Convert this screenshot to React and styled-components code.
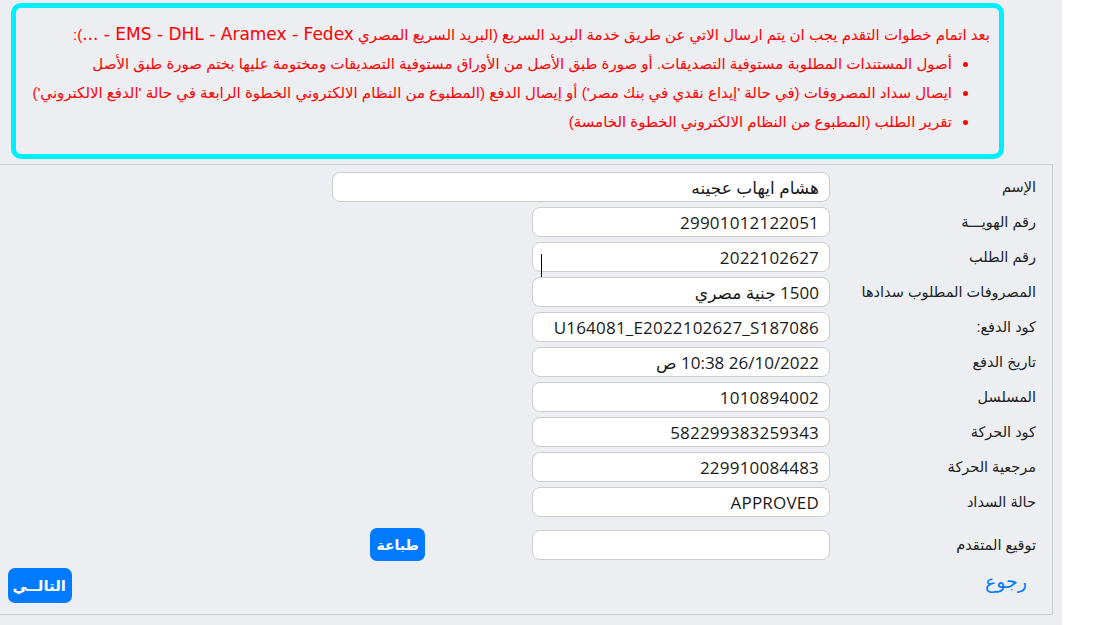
import React from "react";
import styled, { createGlobalStyle } from "styled-components";

const GlobalStyle = createGlobalStyle`
  html, body {
    margin: 0;
    padding: 0;
    background: #ffffff;
  }
  * {
    box-sizing: border-box;
  }
`;

const rows = [
  { label: "الإسم", value: "هشام ايهاب عجينه", wide: true },
  { label: "رقم الهويـــة", value: "29901012122051" },
  { label: "رقم الطلب", value: "2022102627", caret: true },
  { label: "المصروفات المطلوب سدادها", value: "1500 جنية مصري" },
  { label: "كود الدفع:", value: "U164081_E2022102627_S187086" },
  { label: "تاريخ الدفع", value: "26/10/2022 10:38 ص" },
  { label: "المسلسل", value: "1010894002" },
  { label: "كود الحركة", value: "582299383259343" },
  { label: "مرجعية الحركة", value: "229910084483" },
  { label: "حالة السداد", value: "APPROVED" },
];

export default function App() {
  return (
    <Page>
      <GlobalStyle />
      <Notice>
        <NoticeTitle>
          بعد اتمام خطوات التقدم يجب ان يتم ارسال الاتي عن طريق خدمة البريد
          السريع (البريد السريع المصري <Latin>EMS - DHL - Aramex - Fedex - ...</Latin>):
        </NoticeTitle>
        <NoticeList>
          <li>
            أصول المستندات المطلوبة مستوفية التصديقات. أو صورة طبق الأصل من
            الأوراق مستوفية التصديقات ومختومة عليها بختم صورة طبق الأصل
          </li>
          <li>
            ايصال سداد المصروفات (في حالة 'إيداع نقدي في بنك مصر') أو إيصال
            الدفع (المطبوع من النظام الالكتروني الخطوة الرابعة في حالة 'الدفع
            الالكتروني')
          </li>
          <li>تقرير الطلب (المطبوع من النظام الالكتروني الخطوة الخامسة)</li>
        </NoticeList>
      </Notice>

      <Panel>
        <Rows>
          {rows.map((r) => (
            <Row key={r.label}>
              <Label>{r.label}</Label>
              <Field $wide={r.wide}>
                <Input readOnly value={r.value} />
                {r.caret && <Caret />}
              </Field>
            </Row>
          ))}
          <SignRow>
            <Label>توقيع المتقدم</Label>
            <Field>
              <Input readOnly value="" />
            </Field>
            <PrintButton>طباعة</PrintButton>
          </SignRow>
        </Rows>
        <Footer>
          <BackLink href="#">رجوع</BackLink>
          <NextButton>التالــي</NextButton>
        </Footer>
      </Panel>
    </Page>
  );
}

const arabic = `"Liberation Sans", "DejaVu Sans", sans-serif`;

const Page = styled.div`
  width: 1062px;
  min-height: 625px;
  padding-top: 3px;
  background: #edeef2;
  direction: rtl;
  font-family: ${arabic};
  overflow: hidden;
`;

const Notice = styled.div`
  margin: 0 58px 0 11px;
  height: 156px;
  padding: 12px 9px 0 10px;
  border: 5px solid #00efff;
  border-radius: 10px;
  color: #ff0000;
  font-size: 15px;
  line-height: 29px;
`;

const NoticeTitle = styled.div``;

const Latin = styled.span`
  font-family: "DejaVu Sans", sans-serif;
  font-size: 17px;
`;

const NoticeList = styled.ul`
  margin: 0;
  padding: 0 38px 0 0;

  li::marker {
    color: #ff0000;
  }
`;

const Panel = styled.div`
  margin-top: 5px;
  width: 1053px;
  margin-right: 9px;
  border: 1px solid #cccccc;
  border-left: none;
  padding: 7px 0 11px;
`;

const Rows = styled.div`
  display: flex;
  flex-direction: column;
  gap: 5px;
`;

const Row = styled.div`
  display: flex;
  align-items: center;
  padding-right: 16px;
`;

const SignRow = styled(Row)`
  padding-top: 6px;
  padding-bottom: 7px;
`;

const Label = styled.div`
  width: 206px;
  font-size: 14.5px;
  color: #222222;
`;

const Field = styled.div`
  position: relative;
  width: ${(p) => (p.$wide ? "498px" : "298px")};
`;

const Input = styled.input`
  display: block;
  width: 100%;
  height: 30px;
  padding: 0 10px;
  border: 1px solid #cccccc;
  border-radius: 8px;
  background: #ffffff;
  color: #1a1a1a;
  font-family: "Open Sans", ${arabic};
  font-size: 17px;
  letter-spacing: 0.2px;
  direction: rtl;
  outline: none;
`;

const Caret = styled.span`
  position: absolute;
  left: 9px;
  top: 12px;
  width: 1px;
  height: 24px;
  background: #000000;
`;

const PrintButton = styled.button`
  margin-right: 107px;
  width: 55px;
  height: 33px;
  border: none;
  border-radius: 7px;
  background: #007bff;
  color: #ffffff;
  font-family: ${arabic};
  font-size: 14px;
  font-weight: 600;
`;

const Footer = styled.div`
  display: flex;
  justify-content: space-between;
  align-items: flex-start;
  padding: 0 25px 0 8px;
`;

const BackLink = styled.a`
  margin-top: 2px;
  color: #007bff;
  font-size: 19px;
  text-decoration: none;
`;

const NextButton = styled.button`
  width: 64px;
  height: 35px;
  border: none;
  border-radius: 7px;
  background: #007bff;
  color: #ffffff;
  font-family: ${arabic};
  font-size: 15px;
  font-weight: 600;
`;
